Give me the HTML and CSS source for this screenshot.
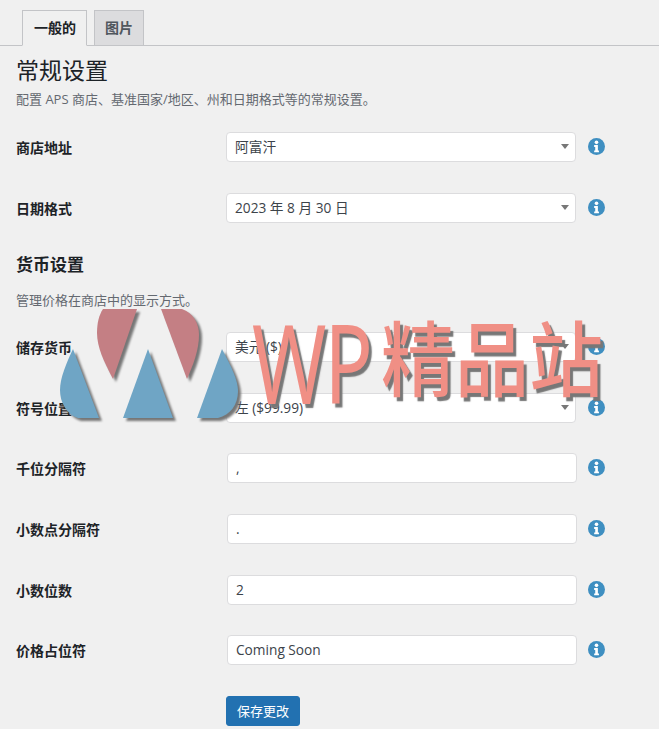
FILE: index.html
```html
<!DOCTYPE html>
<html lang="zh-CN">
<head>
<meta charset="utf-8">
<title>常规设置</title>
<link rel="stylesheet" href="styles.css">
</head>
<body>
<nav class="tabs">
  <a class="tab tab-active">一般的</a>
  <a class="tab">图片</a>
</nav>
<main class="content">
  <h1 class="title">常规设置</h1>
  <p class="desc">配置 APS 商店、基准国家/地区、州和日期格式等的常规设置。</p>
  <div class="rows rows-first">
    <div class="row"><label class="label">商店地址</label><div class="select-wrap"><select class="field"><option>阿富汗</option></select></div><svg class="info" viewBox="0 0 16 16"><use href="#i"/></svg></div>
    <div class="row"><label class="label">日期格式</label><div class="select-wrap"><select class="field"><option>2023 年 8 月 30 日</option></select></div><svg class="info" viewBox="0 0 16 16"><use href="#i"/></svg></div>
  </div>
  <h2 class="subtitle">货币设置</h2>
  <p class="desc desc-sub">管理价格在商店中的显示方式。</p>
  <div class="rows rows-second">
    <div class="row"><label class="label">储存货币</label><div class="select-wrap"><select class="field"><option>美元 ($)</option></select></div><svg class="info" viewBox="0 0 16 16"><use href="#i"/></svg></div>
    <div class="row"><label class="label">符号位置</label><div class="select-wrap"><select class="field"><option>左 ($99.99)</option></select></div><svg class="info" viewBox="0 0 16 16"><use href="#i"/></svg></div>
    <div class="row row-input"><label class="label">千位分隔符</label><input class="field" value=","><svg class="info" viewBox="0 0 16 16"><use href="#i"/></svg></div>
    <div class="row row-input"><label class="label">小数点分隔符</label><input class="field" value="."><svg class="info" viewBox="0 0 16 16"><use href="#i"/></svg></div>
    <div class="row row-input"><label class="label">小数位数</label><input class="field" value="2"><svg class="info" viewBox="0 0 16 16"><use href="#i"/></svg></div>
    <div class="row row-input"><label class="label">价格占位符</label><input class="field" value="Coming Soon"><svg class="info" viewBox="0 0 16 16"><use href="#i"/></svg></div>
  </div>
  <div class="actions"><button class="save">保存更改</button></div>
</main>

<svg class="defs" width="0" height="0"><symbol id="i" viewBox="0 0 16 16"><circle cx="8" cy="8" r="8" fill="#3f8fc1"/><circle cx="8" cy="4.1" r="1.7" fill="#fff"/><path d="M5.8 6.7h3.5v5.1h1v1.7H5.8v-1.7h1V8.4h-1z" fill="#fff"/></symbol></svg>

<div class="watermark">
  <svg class="wm-logo" viewBox="0 0 659 729" width="659" height="729">
    <g fill="#c47f84">
      <path d="M103 309H137L113 379C104 362 97 347 97 333C97 323 99 315 103 309Z"/>
      <path d="M161 309H182C193 313 199 323 199 335C199 350 193 365 187 379Z"/>
    </g>
    <g fill="#6fa5c5">
      <path d="M73 349L99 418H78C66 414 60 402 60 390C60 378 66 364 73 349Z"/>
      <path d="M148 349L173 418H123Z"/>
      <path d="M222 349C231 366 238 380 238 391C238 405 230 415 218 418H197Z"/>
    </g>
  </svg>
  <span class="wm-text"><span class="wm-latin">WP</span><span class="wm-cjk">精品站</span></span>
</div>
</body>
</html>
```

FILE: styles.css
```css
* { box-sizing: border-box; }
html, body { margin: 0; padding: 0; }
body {
  position: relative;
  height: 729px;
  overflow: hidden;
  background: #f0f0f0;
  color: #3c434a;
  font-family: "Open Sans", "Noto Sans CJK SC", sans-serif;
  font-size: 13px;
}
.tabs {
  display: flex;
  gap: 7px;
  height: 46px;
  padding: 10px 0 0 22px;
  border-bottom: 1px solid #c3c4c7;
}
.tab {
  height: 36px;
  padding: 0 10px;
  line-height: 34px;
  font-size: 14px;
  font-weight: 700;
  color: #50575e;
  background: #dcdcde;
  border: 1px solid #c3c4c7;
}
.tab-active {
  padding: 0 10px 0 11px;
  color: #1d2327;
  background: #f0f0f0;
  border-bottom-color: #f0f0f0;
}
.content { padding: 0 16px; }
.title {
  margin: 9px 0 0;
  font-size: 23px;
  line-height: 30px;
  font-weight: 400;
  color: #1d2327;
}
.desc {
  margin: 5px 0 0;
  font-size: 13px;
  line-height: 18px;
  color: #646970;
}
.rows-first { margin-top: 24px; }
.rows { display: flex; flex-direction: column; gap: 31px; }
.rows-second { gap: 30.65px; }
.row { display: flex; align-items: center; height: 30px; }
.label {
  width: 210px;
  flex: none;
  font-size: 14px;
  font-weight: 700;
  color: #1d2327;
}
.select-wrap { position: relative; flex: none; width: 350px; height: 30px; }
.select-wrap::after {
  content: "";
  position: absolute;
  right: 7px;
  top: 12px;
  border-left: 4px solid transparent;
  border-right: 4px solid transparent;
  border-top: 5px solid #777;
}
.field {
  display: block;
  width: 100%;
  height: 100%;
  padding: 0 8px 1px;
  background: #fff;
  border: 1px solid #dcdcde;
  border-radius: 4px;
  color: #3c434a;
  font: 13.7px "Open Sans", "Noto Sans CJK SC", sans-serif;
  appearance: none;
  outline: none;
}
.row-input .field { width: 350px; height: 30px; flex: none; margin-left: 1px; }
.info { width: 17px; height: 17px; flex: none; margin: 0 0 1px 12px; }
.row-input .info { margin-left: 11px; }
.subtitle {
  margin: 31px 0 0;
  font-size: 17px;
  line-height: 22px;
  font-weight: 700;
  color: #1d2327;
}
.desc-sub { margin-top: 15px; }
.rows-second { margin-top: 23px; }
.actions { margin: 30.75px 0 0 210px; }
.save {
  display: block;
  width: 74px;
  height: 30px;
  padding: 0;
  background: #2271b1;
  border: 1px solid #2271b1;
  border-radius: 3px;
  color: #fff;
  font: 13px "Open Sans", "Noto Sans CJK SC", sans-serif;
}
.defs { position: absolute; }
.watermark {
  position: absolute;
  inset: 0;
  pointer-events: none;
}
.wm-logo {
  position: absolute;
  left: 0;
  top: 0;
  filter: drop-shadow(3px 3px 1px #777);
}
.wm-text {
  position: absolute;
  left: 252px;
  top: 304px;
  display: flex;
  align-items: center;
  height: 112px;
  white-space: nowrap;
  color: #f08f85;
  text-shadow: 3px 3px 1px #777;
}
.wm-latin {
  width: 129px;
  font-family: "Noto Sans", sans-serif;
  font-size: 80px;
  font-weight: 400;
  letter-spacing: -2px;
  transform: scaleY(1.38);
}
.wm-cjk {
  margin-top: -12px;
  font-family: "Noto Sans CJK SC", sans-serif;
  font-size: 74px;
  font-weight: 500;
  transform: scaleY(1.1);
}
```
